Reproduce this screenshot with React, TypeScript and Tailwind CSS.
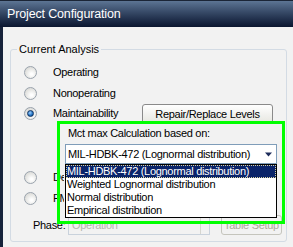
function Radio({ checked = false }: { checked?: boolean }) {
  return (
    <span className="relative flex w-[13px] h-[13px] shrink-0 items-center justify-center rounded-full border border-[#9aa3ad] bg-[radial-gradient(circle_at_60%_65%,#ffffff_10%,#d3d3cf_90%)]">
      {checked && (
        <span className="w-[7px] h-[7px] rounded-full border border-[#10325e] bg-[radial-gradient(circle_at_40%_35%,#9fd0ff,#1f6fc0_60%,#0e3f7a)]" />
      )}
    </span>
  );
}

function RadioRow({ label, checked, h, w = 'w-[89px]', children }: { label: string; checked?: boolean; h: string; w?: string; children?: React.ReactNode }) {
  return (
    <div className={`flex items-center pl-[13px] ${h}`}>
      <Radio checked={checked} />
      <span className={`ml-[16px] overflow-hidden whitespace-nowrap ${w}`}>{label}</span>
      {children}
    </div>
  );
}

const options = [
  'MIL-HDBK-472 (Lognormal distribution)',
  'Weighted Lognormal distribution',
  'Normal distribution',
  'Empirical distribution',
];

export default function App() {
  return (
    <div className="w-[293px] h-[247px] overflow-hidden bg-[#f2f2f2] font-['Liberation_Sans',Arial,sans-serif] text-[11px] tracking-[-0.3px] text-black">
      {/* title bar */}
      <div className="h-[27px] flex items-center pl-[7px] border-t border-[#1b2536] bg-gradient-to-b from-[#5d7594] to-[#0b1630] text-white text-[12.5px] tracking-[-0.15px]">
        Project Configuration
      </div>

      <div className="flex h-[220px]">
        <div className="w-[3px] bg-[#16223a]" />
        <div className="pl-[7px] pt-[22px]">
          {/* group box */}
          <div className="relative w-[277px] h-[193px] border border-[#d3dbe4] rounded-[3px] pt-[11px]">
            <span className="absolute left-[6px] -top-[7px] px-[2px] leading-[13px] tracking-normal bg-[#f2f2f2]">Current Analysis</span>

            <RadioRow label="Operating" h="h-[22px]" />
            <RadioRow label="Nonoperating" h="h-[20px]" />
            <RadioRow label="Maintainability" checked h="h-[21px]">
              <button className="w-[131px] h-[20px] rounded-[3px] border border-[#8a8a8a] bg-gradient-to-b from-white to-[#e6e6e0] leading-[18px]">
                Repair/Replace Levels
              </button>
            </RadioRow>
            <div className="h-[43px]" />
            <RadioRow label="Derating" h="h-[21px]" w="w-[11px]" />
            <RadioRow label="FMECA" h="h-[21px]" w="w-[11px]" />

            <div className="mt-[6px] flex items-center pl-[22px] h-[20px]">
              <span className="w-[35px]">Phase:</span>
              <div className="flex w-[142px] h-[20px] border border-[#c9d2dc] bg-[#f2f2f2]">
                <span className="flex-1 pl-[3px] leading-[18px] text-[#b5b5ad]">Operation</span>
                <span className="w-[9px] border-l border-[#d6d6d0]" />
              </div>
              <button className="ml-[11px] w-[61px] h-[20px] rounded-[3px] border border-[#c5c5bd] text-[#aca899] leading-[18px] whitespace-nowrap">
                Table Setup
              </button>
            </div>

            {/* highlighted Mct max block */}
            <div className="absolute left-[46px] top-[71px] w-[228px] h-[103px] border-[3px] border-[#00ff00]">
              <div className="pl-[8px] pt-[3px] leading-[13px]">Mct max Calculation based on:</div>
              <div className="relative ml-[5px] mt-[4px] w-[212px]">
                <div className="flex items-center h-[20px] border border-[#7f9db9] bg-white pl-[2px]">
                  <span className="flex-1 whitespace-nowrap">{options[0]}</span>
                  <svg width="15" height="18" viewBox="0 0 15 18" className="shrink-0">
                    <path d="M4 7.5h7l-3.5 4z" fill="#1d2c5a" />
                  </svg>
                </div>
                <div className="absolute left-0 top-[20px] w-[212px] border border-black bg-white">
                  {options.map((o, i) => (
                    <div
                      key={o}
                      className={`h-[13px] leading-[12px] pl-[1px] whitespace-nowrap ${
                        i === 0 ? 'bg-[#0a246a] text-white outline outline-1 outline-dotted outline-[#d9d2a0] -outline-offset-1' : ''
                      }`}
                    >
                      {o}
                    </div>
                  ))}
                </div>
              </div>
            </div>
          </div>
        </div>
      </div>
    </div>
  );
}
